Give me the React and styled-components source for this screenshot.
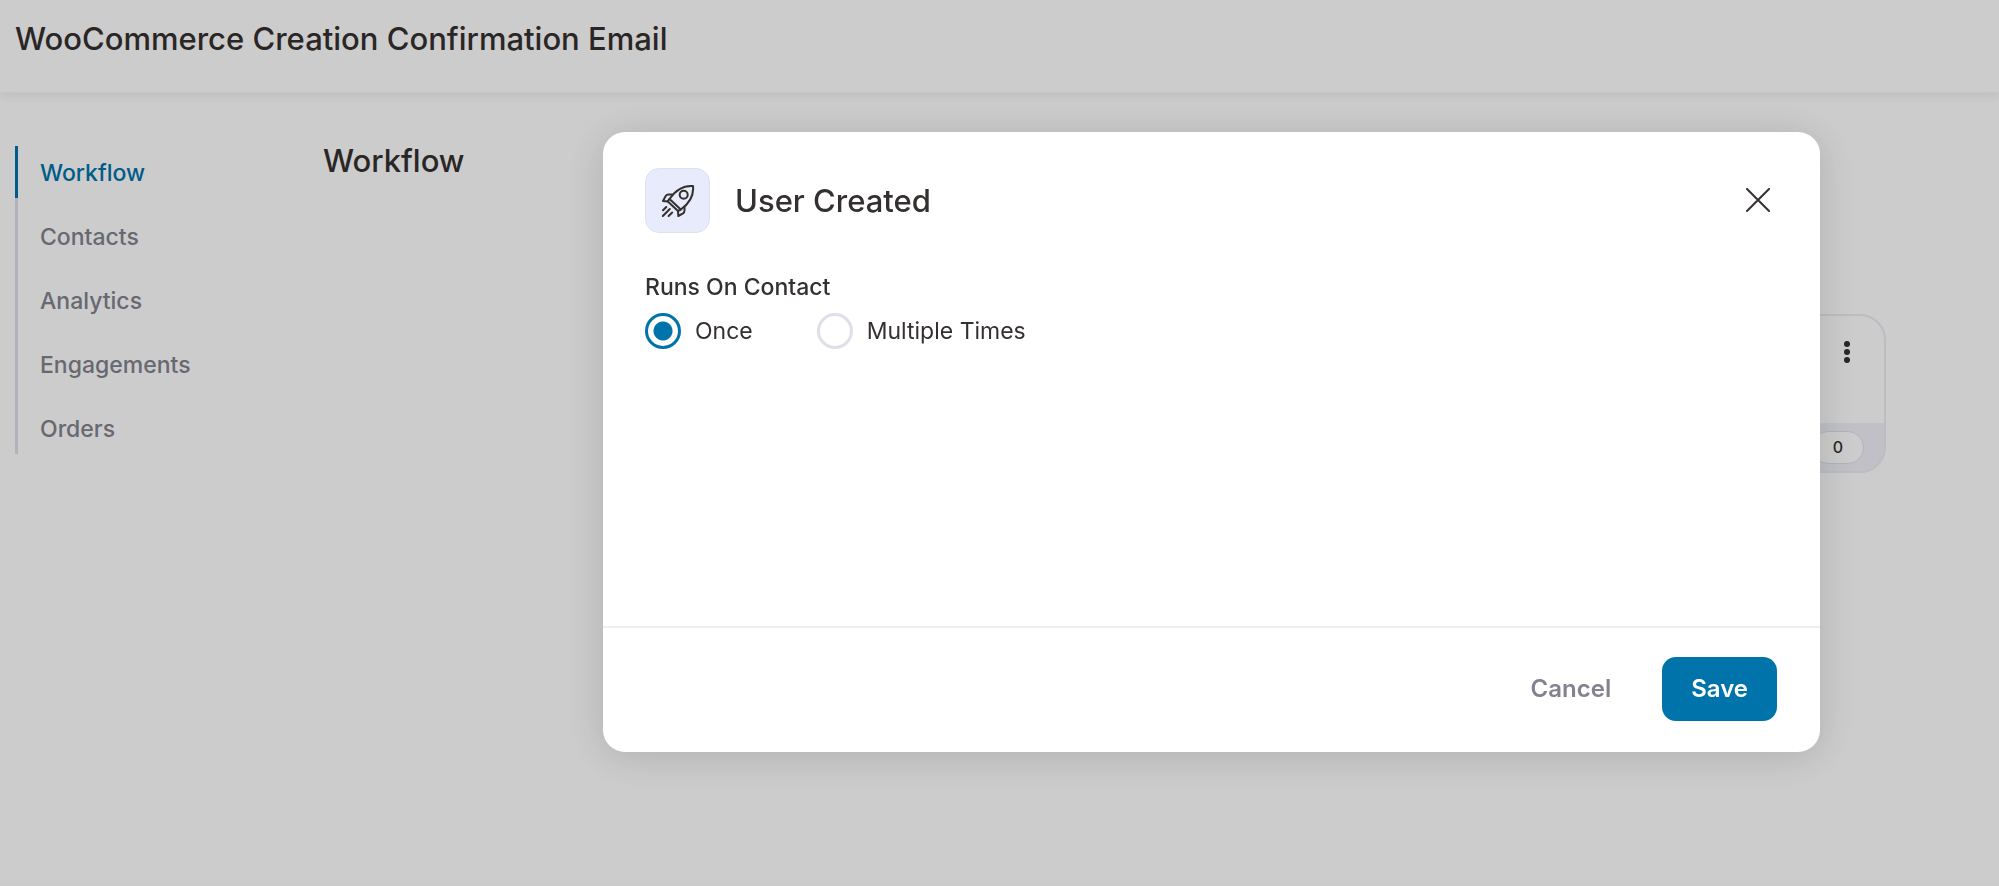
import React, { useState } from 'react';
import styled, { createGlobalStyle, ThemeProvider } from 'styled-components';

const theme = {
    primary: '#0073aa',
    text: '#353030',
    muted: '#82838e',
    line: '#dedfea',
    soft: '#f0f1f8',
};

const GlobalStyle = createGlobalStyle`
    * {
        box-sizing: border-box;
    }

    body {
        margin: 0;
        background: #fff;
        color: ${theme.text};
        font-family: Inter, 'Liberation Sans', sans-serif;
    }

    button,
    input {
        font-family: inherit;
    }
`;

const Page = styled.div`
    min-height: 100vh;
`;

const Header = styled.header`
    padding: 14px 15px 28px;
    border-bottom: 1px solid #f8f8fa;
    box-shadow: 0 4px 8px rgba(0, 0, 0, 0.06);
`;

const Title = styled.h1`
    margin: 0;
    font-size: 31px;
    font-weight: 500;
    line-height: 50px;
`;

const Content = styled.div`
    display: flex;
    align-items: flex-start;
    padding: 53px 113px 0 15px;
`;

const Nav = styled.nav`
    display: flex;
    flex-direction: column;
    gap: 12px;
    flex: none;
    width: 308px;
    box-shadow: inset 3px 0 0 ${(props) => props.theme.line};
`;

const NavLink = styled.a`
    padding: 2px 0 0 22px;
    border-left: 3px solid ${(props) => (props.$active ? props.theme.primary : 'transparent')};
    color: ${(props) => (props.$active ? props.theme.primary : props.theme.muted)};
    font-size: 23px;
    font-weight: 500;
    line-height: 50px;
    text-decoration: none;
`;

const Main = styled.main`
    flex: 1;
`;

const SectionTitle = styled.h2`
    margin: 0;
    font-size: 31px;
    font-weight: 500;
    line-height: 30px;
`;

const Card = styled.article`
    width: 480px;
    margin: 138px 0 0 auto;
    border: 2px solid #ebebf3;
    border-radius: 26px;
    overflow: hidden;
`;

const CardBody = styled.div`
    display: flex;
    justify-content: flex-end;
    padding: 20px 29px 55px;
`;

const MenuButton = styled.button`
    display: flex;
    padding: 5px;
    border: none;
    background: none;
    color: ${(props) => props.theme.text};
`;

const CardFooter = styled.div`
    display: flex;
    justify-content: flex-end;
    padding: 8px 20px 7px;
    background: ${(props) => props.theme.soft};
`;

const Count = styled.span`
    width: 52px;
    border: 1px solid ${(props) => props.theme.line};
    border-radius: 16px;
    background: #fff;
    font-size: 16px;
    font-weight: 500;
    line-height: 31px;
    text-align: center;
`;

const Overlay = styled.div`
    position: fixed;
    inset: 0 0 1px;
    display: flex;
    align-items: flex-start;
    padding: 132px 179px 0 603px;
    background: rgba(0, 0, 0, 0.2);
`;

const ModalWindow = styled.section`
    flex: 1;
    border-radius: 22px;
    background: #fff;
    box-shadow: 0 4px 40px rgba(0, 0, 0, 0.15);
`;

const ModalHeader = styled.div`
    display: flex;
    align-items: center;
    gap: 25px;
    padding: 36px 43px 38px 42px;
`;

const IconBox = styled.div`
    display: flex;
    align-items: center;
    justify-content: center;
    width: 65px;
    height: 65px;
    border: 1px solid #e0e1ef;
    border-radius: 14px;
    background: #e8ebfb;
`;

const ModalTitle = styled.h2`
    flex: 1;
    margin: 0;
    font-size: 31px;
    font-weight: 500;
    line-height: 50px;
`;

const Close = styled.button`
    display: flex;
    padding: 6px;
    border: none;
    background: none;
    color: ${(props) => props.theme.text};
    cursor: pointer;
`;

const ModalBody = styled.div`
    min-height: 355px;
    padding: 0 42px;
`;

const Field = styled.fieldset`
    margin: 0;
    padding: 0;
    border: none;
`;

const Legend = styled.legend`
    padding: 0;
    font-size: 23px;
    font-weight: 500;
    line-height: 32px;
`;

const Options = styled.div`
    display: flex;
    gap: 64px;
    padding-top: 10px;
`;

const Option = styled.label`
    display: flex;
    align-items: center;
    gap: 14px;
    font-size: 23px;
    line-height: 36px;
    cursor: pointer;
`;

const Radio = styled.input`
    width: 36px;
    height: 36px;
    margin: 0;
    border: 3px solid ${(props) => props.theme.line};
    border-radius: 50%;
    appearance: none;

    &:checked {
        border-color: ${(props) => props.theme.primary};
        background: radial-gradient(circle, ${(props) => props.theme.primary} 9px, #fff 10px);
    }
`;

const ModalFooter = styled.div`
    display: flex;
    justify-content: flex-end;
    gap: 22px;
    padding: 29px 43px 31px;
    border-top: 2px solid #ededf4;
`;

const Button = styled.button`
    padding: 0 29px;
    border: none;
    border-radius: 14px;
    background: ${(props) => (props.$primary ? props.theme.primary : 'none')};
    color: ${(props) => (props.$primary ? '#fff' : props.theme.muted)};
    font-size: 24px;
    font-weight: 600;
    line-height: 64px;
    cursor: pointer;
`;

const links = ['Workflow', 'Contacts', 'Analytics', 'Engagements', 'Orders'];
const runs = ['Once', 'Multiple Times'];

const RocketIcon = () => (
    <svg
        width="34"
        height="34"
        viewBox="-1 -1 34 34"
        fill="none"
        stroke="currentColor"
        strokeWidth="2"
        strokeLinecap="round"
        strokeLinejoin="round"
        aria-hidden="true"
    >
        <path d="M31 1C22 .4 14.5 3.5 7.5 14L18.8 24.5C28 18 32 10.5 31 1Z" />
        <path d="M7.5 14L5.6 16.3L16 26L18.8 24.5" />
        <circle cx="21.7" cy="9.8" r="4" />
        <path d="M10 9.5H6.5C5 9.5 4.3 10 3.7 11L1 16L5.8 16.5" />
        <path d="M22.5 21.8V25.5C22.5 27 22 27.8 21 28.4L16.3 31L16 26" />
        <path d="M4.3 22L1 25.3M7.8 24L.8 31M10.2 27.6L6.6 31" />
    </svg>
);

const CloseIcon = () => (
    <svg
        width="26"
        height="26"
        viewBox="0 0 26 26"
        stroke="currentColor"
        strokeWidth="2"
        strokeLinecap="round"
        aria-hidden="true"
    >
        <path d="M2 1L24 23M24 1L2 23" />
    </svg>
);

const DotsIcon = () => (
    <svg width="6" height="22" viewBox="0 0 6 22" fill="currentColor" aria-hidden="true">
        <circle cx="3" cy="3" r="3" />
        <circle cx="3" cy="11" r="3" />
        <circle cx="3" cy="19" r="3" />
    </svg>
);

const Modal = ({ title, onClose, children }) => (
    <Overlay>
        <ModalWindow role="dialog" aria-modal="true" aria-labelledby="modal-title">
            <ModalHeader>
                <IconBox>
                    <RocketIcon />
                </IconBox>
                <ModalTitle id="modal-title">{title}</ModalTitle>
                <Close type="button" aria-label="Close" onClick={onClose}>
                    <CloseIcon />
                </Close>
            </ModalHeader>
            <ModalBody>{children}</ModalBody>
            <ModalFooter>
                <Button type="button" onClick={onClose}>
                    Cancel
                </Button>
                <Button type="button" $primary onClick={onClose}>
                    Save
                </Button>
            </ModalFooter>
        </ModalWindow>
    </Overlay>
);

const App = () => {
    const [open, setOpen] = useState(true);
    const [run, setRun] = useState('Once');

    return (
        <ThemeProvider theme={theme}>
            <GlobalStyle />
            <Page>
                <Header>
                    <Title>WooCommerce Creation Confirmation Email</Title>
                </Header>
                <Content>
                    <Nav>
                        {links.map((link) => (
                            <NavLink
                                key={link}
                                href={`#${link.toLowerCase()}`}
                                $active={link === 'Workflow'}
                            >
                                {link}
                            </NavLink>
                        ))}
                    </Nav>
                    <Main>
                        <SectionTitle>Workflow</SectionTitle>
                        <Card>
                            <CardBody>
                                <MenuButton
                                    type="button"
                                    aria-label="Options"
                                    onClick={() => setOpen(true)}
                                >
                                    <DotsIcon />
                                </MenuButton>
                            </CardBody>
                            <CardFooter>
                                <Count>0</Count>
                            </CardFooter>
                        </Card>
                    </Main>
                </Content>
            </Page>
            {open && (
                <Modal title="User Created" onClose={() => setOpen(false)}>
                    <Field>
                        <Legend>Runs On Contact</Legend>
                        <Options>
                            {runs.map((option) => (
                                <Option key={option}>
                                    <Radio
                                        type="radio"
                                        name="runs"
                                        checked={run === option}
                                        onChange={() => setRun(option)}
                                    />
                                    {option}
                                </Option>
                            ))}
                        </Options>
                    </Field>
                </Modal>
            )}
        </ThemeProvider>
    );
};

export default App;
